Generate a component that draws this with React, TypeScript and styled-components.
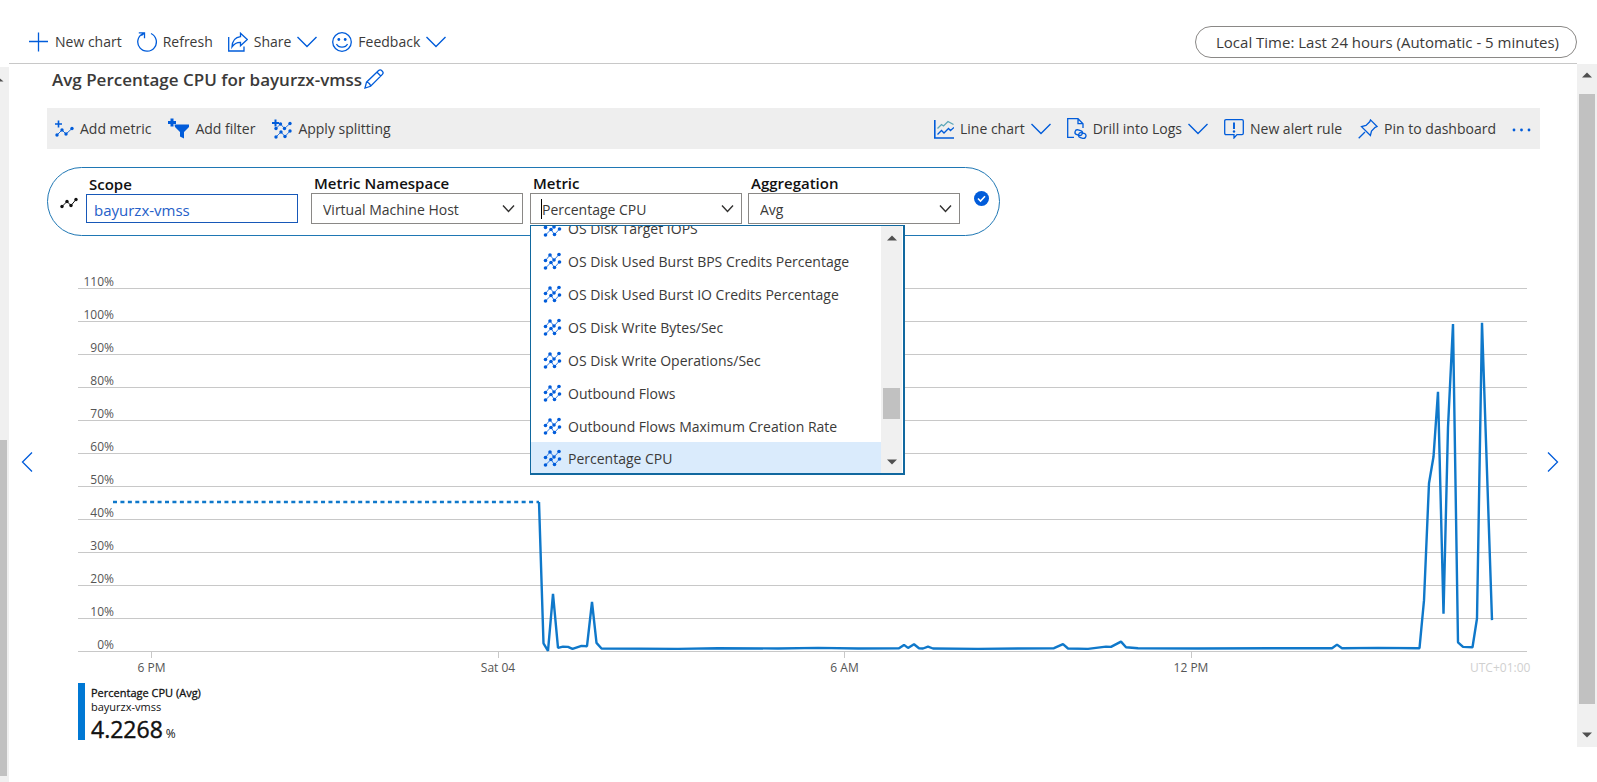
import React from "react";
import styled, { createGlobalStyle } from "styled-components";

const blue = "#015cda";
const lineBlue = "#0f78ca";

const GlobalStyle = createGlobalStyle`
  *, *::before, *::after { box-sizing: border-box; }
  body { margin: 0; background: #fff; color: #3b3a39; }
  body, button, input, select {
    font-family: "Open Sans", "Noto Sans", sans-serif;
    font-size: 14px;
    line-height: 20px;
  }
  button { background: none; border: 0; padding: 0; color: inherit; cursor: pointer; }
  svg { display: block; flex: none; }
`;

const Page = styled.div`
  display: flex;
  min-height: 100vh;
`;

const Main = styled.main`
  flex: 1;
  min-width: 0;
  display: flex;
  flex-direction: column;
`;

const Header = styled.header`
  height: 64px;
  margin-right: 20px;
  padding: 20px 0 0 20px;
  border-bottom: 1px solid #c8c8c8;
  display: flex;
  align-items: center;
  justify-content: space-between;
`;

const Group = styled.div<{ $gap: number }>`
  display: flex;
  align-items: center;
  gap: ${(p) => p.$gap}px;
`;

const ToolButton = styled.button`
  display: flex;
  align-items: center;
  gap: 6px;
  white-space: nowrap;
`;

const TimePill = styled.button`
  height: 32px;
  padding: 0 17px 0 20px;
  border: 1px solid #8a8886;
  border-radius: 16px;
  font-size: 15px;
  white-space: nowrap;
`;

const Body = styled.div`
  flex: 1;
  display: flex;
  margin-bottom: 35px;
`;

const Content = styled.div`
  flex: 1;
  min-width: 0;
`;

const TitleRow = styled.div`
  display: flex;
  align-items: center;
  gap: 2px;
  height: 30px;
  margin: 0 37px 14px 43px;
`;

const Title = styled.h1`
  margin: 0;
  padding-top: 2px;
  font-size: 17px;
  line-height: 24px;
  font-weight: 600;
`;

const CommandBar = styled.div`
  display: flex;
  align-items: center;
  justify-content: space-between;
  height: 41px;
  margin: 0 37px 18px 38px;
  padding: 0 9px 0 8px;
  background: #eee;
`;

const MetricPill = styled.section`
  display: inline-flex;
  align-items: center;
  height: 69px;
  margin-left: 38px;
  padding: 0 10px 6px 12px;
  border: 1px solid #1f77b4;
  border-radius: 35px;
`;

const SeriesIcon = styled.span`
  padding-top: 9px;
  margin-right: 8px;
`;

const Status = styled.span`
  margin-left: 14px;
`;

const Field = styled.div<{ $after?: number }>`
  position: relative;
  width: 212px;
  margin-right: ${(p) => p.$after ?? 0}px;
`;

const Label = styled.label`
  display: block;
  padding-left: 3px;
  color: #111;
  font-size: 15px;
  font-weight: 600;
`;

const ScopeInput = styled.input`
  display: block;
  width: 100%;
  height: 29px;
  padding: 3px 7px 0;
  border: 1px solid #1758b8;
  background: #fff;
  color: #2560c8;
  font-size: 15px;
`;

const Control = styled.div`
  position: relative;
  display: flex;
  align-items: center;
  height: 31px;
  border: 1px solid #8a8886;

  select, input {
    width: 100%;
    height: 100%;
    padding: 2px 30px 0 11px;
    border: 0;
    outline: 0;
    appearance: none;
    background: transparent;
    color: #3b3a39;
  }

  svg {
    position: absolute;
    right: 7px;
    top: 9px;
    pointer-events: none;
  }
`;

const Caret = styled.span`
  position: absolute;
  left: 10px;
  top: 5px;
  width: 1px;
  height: 20px;
  background: #000;
`;

const Dropdown = styled.div`
  position: absolute;
  z-index: 2;
  top: 52px;
  left: 0;
  width: 375px;
  height: 250px;
  display: flex;
  padding-right: 1px;
  border: 1px solid #11689f;
  border-right-width: 2px;
  border-bottom-width: 2px;
  background: #fff;
`;

const Options = styled.ul`
  flex: 1;
  margin: 0;
  padding: 0;
  list-style: none;
  overflow: hidden;
  display: flex;
  flex-direction: column;
  justify-content: flex-end;
`;

const Option = styled.li<{ $selected: boolean }>`
  flex: none;
  display: flex;
  align-items: center;
  gap: 6px;
  height: ${(p) => (p.$selected ? 31 : 33)}px;
  padding: 2px 0 0 12px;
  background: ${(p) => (p.$selected ? "#daebfc" : "transparent")};
  white-space: nowrap;
`;

const Scrollbar = styled.div<{ $width: number; $top?: number; $bottom?: number }>`
  flex: none;
  display: flex;
  flex-direction: column;
  align-items: center;
  justify-content: space-between;
  width: ${(p) => p.$width}px;
  padding: ${(p) => p.$top ?? 0}px 0 ${(p) => p.$bottom ?? 0}px;
  background: #f0f0f0;
`;

const Thumb = styled.div<{ $before: number; $after: number; $width?: number }>`
  width: ${(p) => p.$width ?? 16}px;
  flex: 1;
  margin: ${(p) => p.$before}px 0 ${(p) => p.$after}px;
  background: #c1c1c1;
`;

const LeftScrollbar = styled.div`
  flex: none;
  width: 9px;
  margin-top: 67px;
  padding: 9px 0 0;
  background: #f0f0f0;
  display: flex;
  flex-direction: column;
`;

const LeftThumb = styled.div`
  flex: 1;
  margin: 358px 2px 6px 0;
  background: #c1c1c1;
`;

const ChartRow = styled.div`
  display: flex;
  align-items: center;
  margin-top: 20px;
`;

const NavButton = styled.button<{ $side: "left" | "right" }>`
  flex: none;
  width: ${(p) => (p.$side === "left" ? 69 : 50)}px;
  padding: 0 0 10px ${(p) => (p.$side === "left" ? 12 : 20)}px;
`;

const Chart = styled.div`
  flex: 1;
  min-width: 0;
`;

const Plot = styled.div`
  position: relative;
`;

const GridRow = styled.div`
  height: 33px;
  padding-top: 18px;
  border-bottom: 1px solid #c8c8c8;
  font-size: 12px;
  line-height: 16px;
  color: #555;
`;

const GridLabel = styled.span`
  display: block;
  width: 36px;
  text-align: right;
`;

const Series = styled.svg`
  position: absolute;
  inset: 0;
  width: 100%;
  height: 100%;
`;

const Axis = styled.div`
  display: grid;
  grid-template-columns: 147fr 546fr 147fr 546fr minmax(0, 63fr);
  height: 26px;
  font-size: 12px;
  line-height: 20px;
  color: #555;
`;

const Tick = styled.span`
  display: flex;
  flex-direction: column;
  align-items: center;

  &::before {
    content: "";
    width: 1px;
    height: 6px;
    background: #c8c8c8;
  }
`;

const Zone = styled.span`
  padding: 6px 0 0 6px;
  color: #d0d0d0;
  white-space: nowrap;
`;

const Legend = styled.div`
  display: flex;
  gap: 6px;
  height: 57px;
  margin: 5px 0 0 69px;
  color: #111;
  font-size: 11px;
  line-height: 14px;

  &::before {
    content: "";
    width: 7px;
    background: #0078d4;
  }
`;

const LegendName = styled.div`
  padding-top: 3px;
  -webkit-text-stroke: 0.3px #111;
`;

const LegendValue = styled.div`
  font-size: 23px;
  line-height: 30px;
  -webkit-text-stroke: 0.4px #111;

  small {
    margin-left: 3px;
    font-size: 12px;
    -webkit-text-stroke: 0;
  }
`;

type SvgProps = { children: React.ReactNode; w?: number; h?: number; color?: string; sw?: number };
const Svg = ({ children, w = 20, h = 20, color = blue, sw = 1.3 }: SvgProps) => (
  <svg width={w} height={h} viewBox={`0 0 ${w} ${h}`} fill="none" stroke={color} strokeWidth={sw} aria-hidden="true">
    {children}
  </svg>
);

const Chevron = () => (
  <Svg h={12} sw={1.4}><path d="M0.5 1 10 10.5 19.5 1" /></Svg>
);
const SelectChevron = () => (
  <Svg w={13} h={12} color="#323130" sw={1.4}><path d="M1 2.5 6.5 8.5 12 2.5" /></Svg>
);
const PlusIcon = () => (
  <Svg><path d="M0 9.5H19M9.5 0.5V19.5" /></Svg>
);
const RefreshIcon = () => (
  <Svg><path d="M14 1.5A9.3 9.3 0 1 1 5.7 1.7M1.8 0.8H7.5V6.2M7.3 1 4.5 3.6" /></Svg>
);
const ShareIcon = () => (
  <Svg><path d="M0.7 5V19H16V14.5" /><path d="M12.5 1.2 19.3 7.5 12.5 13.8V10.3C8.8 10.2 6.3 11.5 4 15 4.3 9.5 7.3 5.3 12.5 4.7Z" /></Svg>
);
const SmileIcon = () => (
  <Svg>
    <circle cx="10" cy="10" r="9.3" />
    <path d="M4.5 12C6.5 16.2 13.5 16.2 15.5 12" />
    <circle cx="6.8" cy="7.5" r="1.4" fill={blue} stroke="none" />
    <circle cx="13.2" cy="7.5" r="1.4" fill={blue} stroke="none" />
  </Svg>
);
const PencilIcon = () => (
  <Svg><path d="M1 19 2.5 13.2 14.6 1.6C16.8-0.4 20.5 3.2 18.4 5.4L6.6 17.3ZM2.5 13.2C4.5 13.3 6.5 15.2 6.6 17.3M13 3.2 16.8 7" /></Svg>
);

const dots = (pts: number[][], r = 1.5, color = blue) =>
  pts.map(([x, y]) => <circle key={`${x}-${y}`} cx={x} cy={y} r={r} fill={color} stroke="none" />);

const AddMetricIcon = () => (
  <Svg w={19} sw={0.9}>
    <path d="M0 5H7M3.5 1.5V8.5" strokeWidth="1.6" />
    <path d="M2 16 7 11 11 15 17 9.5" />
    {dots([[2, 16], [7, 11], [11, 15], [17, 9.5]], 1.7)}
  </Svg>
);
const AddFilterIcon = () => (
  <Svg w={21} h={21}>
    <path d="M0 4.5H8M4 0.5V8.5" strokeWidth="3" />
    <path d="M6.5 6.5H21V9L16 14V20.5L12 18.5V14L7 9Z" fill={blue} stroke="none" />
  </Svg>
);
const zigTop = [[2.5, 8.5], [7, 3], [11, 8], [16, 2.5]];
const zigBottom = [[2.5, 16], [8, 10.5], [11.5, 15.5], [16.5, 10]];
const toPath = (pts: number[][]) => "M" + pts.map((p) => p.join(" ")).join("L");
const MetricsIcon = () => (
  <Svg w={19} h={20} sw={0.8}>
    <path d={toPath(zigTop)} /><path d={toPath(zigBottom)} />
    {dots([...zigTop, ...zigBottom], 1.8)}
  </Svg>
);
const splitTop = [[4, 9.5], [8.5, 5], [12.5, 9.5], [18, 4.5]];
const splitBottom = [[4, 18], [9, 13], [13, 17.5], [18, 12]];
const SplitIcon = () => (
  <Svg w={20} h={20} sw={0.8}>
    <path d="M0 4H7M3.5 0.5V7.5" strokeWidth="2" />
    <path d={toPath(splitTop)} /><path d={toPath(splitBottom)} />
    {dots([...splitTop, ...splitBottom], 1.7)}
  </Svg>
);
const LineChartIcon = () => (
  <Svg>
    <path d="M0.8 1V19H20" strokeWidth="1.6" />
    <path d="M3.5 15.5 7.5 11.5 10 14 14.5 9.5 16.5 11.5 20 8.5" />
    <path d="M3.5 9.5 7.5 5.5 9.5 7 14 2.5 19.5 5.5" stroke="#5ba7b8" />
  </Svg>
);
const LogsIcon = () => (
  <Svg h={21}>
    <path d="M7 19.3H0.7V0.7H11L16 5.7V10M11 0.7V5.7H16" />
    <rect x="8" y="12.2" width="7.5" height="5" rx="2.5" transform="rotate(15 12 14.5)" />
    <rect x="11.5" y="15" width="7.5" height="5" rx="2.5" transform="rotate(15 15 17.5)" />
  </Svg>
);
const AlertIcon = () => (
  <Svg>
    <path d="M2 0.7H18Q19.3 0.7 19.3 2V14.3Q19.3 15.6 18 15.6H13L10 19V15.6H2Q0.7 15.6 0.7 14.3V2Q0.7 0.7 2 0.7Z" />
    <path d="M10 3.5V10" strokeWidth="1.9" /><circle cx="10" cy="12.5" r="1.2" fill={blue} stroke="none" />
  </Svg>
);
const PinIcon = () => (
  <Svg><path d="M0.7 19.3 7 13M12.5 0.9 19.1 7.5 17.2 8.4 13.5 12 12.4 16.5 3.5 7.7 8 6.5 11.7 2.8Z" /></Svg>
);
const MoreIcon = () => (
  <Svg w={19} h={6}>{dots([[2, 4], [9.5, 4], [17, 4]], 1.4)}</Svg>
);
const SeriesGlyph = () => (
  <Svg w={18} h={12} color="#111" sw={1}>
    <path d="M2 9.5 7 4.5 11 8.5 16 2.5" />
    {dots([[2, 9.5], [7, 4.5], [11, 8.5], [16, 2.5]], 1.7, "#111")}
  </Svg>
);
const CheckIcon = () => (
  <Svg w={15} h={15}><circle cx="7.5" cy="7.5" r="7.5" fill={blue} stroke="none" /><path d="M4 7.5 6.5 10 11 5.2" stroke="#fff" strokeWidth="1.6" /></Svg>
);
const Arrow = ({ down = false }: { down?: boolean }) => (
  <svg width="10" height="6" viewBox="0 0 10 6" aria-hidden="true">
    <path d={down ? "M0 0.5H10L5 5.5Z" : "M0 5.5H10L5 0.5Z"} fill="#505050" />
  </svg>
);
const ClippedArrow = () => (
  <svg width="4" height="6" viewBox="0 0 4 6" aria-hidden="true">
    <path d="M0 2.5 3.5 5.5H0Z" fill="#505050" />
  </svg>
);

const metrics = [
  "OS Disk Target IOPS",
  "OS Disk Used Burst BPS Credits Percentage",
  "OS Disk Used Burst IO Credits Percentage",
  "OS Disk Write Bytes/Sec",
  "OS Disk Write Operations/Sec",
  "Outbound Flows",
  "Outbound Flows Maximum Creation Rate",
  "Percentage CPU",
];

const levels = [110, 100, 90, 80, 70, 60, 50, 40, 30, 20, 10, 0];

// Samples as [x, percent]; the plot is 1449 units wide and 33 units per 10%.
const samples: number[][] = [
  [461, 45.3], [465.5, 2.5], [470, 0.2], [475, 17.5], [480, 1.1], [485, 1.5], [490, 1.4], [494.5, 0.8],
  [503.5, 1.7], [509, 1.6], [514, 15], [518.5, 2.6], [523.5, 0.9], [600, 0.8], [640, 1], [700, 0.9],
  [740, 1.1], [780, 0.9], [821, 1], [826, 2], [830, 1.1], [836, 2.2], [841, 1], [845, 0.9], [850, 1.5],
  [855, 0.9], [900, 0.8], [976, 1], [985, 2.2], [990, 0.9], [1010, 0.8], [1028, 1.5], [1033, 1.4],
  [1043, 3], [1048, 1.3], [1060, 1], [1120, 0.9], [1200, 1], [1254, 1], [1259, 2.1], [1264, 1], [1300, 1.1],
  [1341.5, 1], [1346, 15.5], [1351, 51], [1355.5, 59], [1360, 78.7], [1365.5, 11.5], [1370, 68],
  [1375, 99.2], [1380, 2.8], [1385, 1.4], [1394.5, 1.3], [1399, 10], [1404, 99.6], [1414, 9.5],
];
const plotY = (v: number) => 395.5 - v * 3.3;
const points = samples.map(([x, v]) => `${x},${plotY(v).toFixed(1)}`).join(" ");

export default function App() {
  return (
    <>
      <GlobalStyle />
      <Page>
        <LeftScrollbar><ClippedArrow /><LeftThumb /></LeftScrollbar>
        <Main>
          <Header>
            <Group $gap={15}>
              <ToolButton><PlusIcon />New chart</ToolButton>
              <ToolButton><RefreshIcon />Refresh</ToolButton>
              <ToolButton><ShareIcon />Share<Chevron /></ToolButton>
              <ToolButton><SmileIcon />Feedback<Chevron /></ToolButton>
            </Group>
            <TimePill>Local Time: Last 24 hours (Automatic - 5 minutes)</TimePill>
          </Header>
          <Body>
            <Content>
              <TitleRow>
                <Title>Avg Percentage CPU for bayurzx-vmss</Title>
                <button aria-label="Edit title"><PencilIcon /></button>
              </TitleRow>
              <CommandBar>
                <Group $gap={17}>
                  <ToolButton><AddMetricIcon />Add metric</ToolButton>
                  <ToolButton><AddFilterIcon />Add filter</ToolButton>
                  <ToolButton><SplitIcon />Apply splitting</ToolButton>
                </Group>
                <Group $gap={16}>
                  <ToolButton><LineChartIcon />Line chart<Chevron /></ToolButton>
                  <ToolButton><LogsIcon />Drill into Logs<Chevron /></ToolButton>
                  <ToolButton><AlertIcon />New alert rule</ToolButton>
                  <ToolButton><PinIcon />Pin to dashboard</ToolButton>
                  <ToolButton aria-label="More"><MoreIcon /></ToolButton>
                </Group>
              </CommandBar>
              <MetricPill>
                <SeriesIcon><SeriesGlyph /></SeriesIcon>
                <Field $after={13}>
                  <Label htmlFor="scope">Scope</Label>
                  <ScopeInput id="scope" defaultValue="bayurzx-vmss" />
                </Field>
                <Field $after={7}>
                  <Label htmlFor="namespace">Metric Namespace</Label>
                  <Control>
                    <select id="namespace"><option>Virtual Machine Host</option></select>
                    <SelectChevron />
                  </Control>
                </Field>
                <Field $after={6}>
                  <Label htmlFor="metric">Metric</Label>
                  <Control>
                    <input id="metric" role="combobox" aria-expanded="true" aria-controls="metric-list" defaultValue="Percentage CPU" />
                    <Caret />
                    <SelectChevron />
                  </Control>
                  <Dropdown>
                    <Options id="metric-list" role="listbox">
                      {metrics.map((m) => (
                        <Option key={m} role="option" aria-selected={m === "Percentage CPU"} $selected={m === "Percentage CPU"}>
                          <MetricsIcon />{m}
                        </Option>
                      ))}
                    </Options>
                    <Scrollbar $width={21} $top={9} $bottom={8}>
                      <Arrow />
                      <Thumb $before={147} $after={40} $width={17} />
                      <Arrow down />
                    </Scrollbar>
                  </Dropdown>
                </Field>
                <Field>
                  <Label htmlFor="aggregation">Aggregation</Label>
                  <Control>
                    <select id="aggregation"><option>Avg</option></select>
                    <SelectChevron />
                  </Control>
                </Field>
                <Status><CheckIcon /></Status>
              </MetricPill>
              <ChartRow>
                <NavButton $side="left" aria-label="Earlier"><Svg w={12}><path d="M11 0.5 1.5 10 11 19.5" /></Svg></NavButton>
                <Chart>
                  <Plot>
                    {levels.map((l) => (
                      <GridRow key={l}><GridLabel>{l}%</GridLabel></GridRow>
                    ))}
                    <Series viewBox="0 0 1449 396" preserveAspectRatio="none" fill="none" stroke={lineBlue} strokeWidth="2.4" aria-label="Percentage CPU over time">
                      <path d="M35 246H461" strokeDasharray="4 3.43" />
                      <polyline points={points} strokeLinejoin="bevel" />
                    </Series>
                  </Plot>
                  <Axis>
                    <Tick>6 PM</Tick>
                    <Tick>Sat 04</Tick>
                    <Tick>6 AM</Tick>
                    <Tick>12 PM</Tick>
                    <Zone>UTC+01:00</Zone>
                  </Axis>
                </Chart>
                <NavButton $side="right" aria-label="Later"><Svg w={12}><path d="M1 0.5 10.5 10 1 19.5" /></Svg></NavButton>
              </ChartRow>
              <Legend>
                <div>
                  <LegendName>Percentage CPU (Avg)</LegendName>
                  <div>bayurzx-vmss</div>
                  <LegendValue>4.2268<small>%</small></LegendValue>
                </div>
              </Legend>
            </Content>
            <Scrollbar $width={20} $top={8} $bottom={9}>
              <Arrow />
              <Thumb $before={16} $after={28} />
              <Arrow down />
            </Scrollbar>
          </Body>
        </Main>
      </Page>
    </>
  );
}
